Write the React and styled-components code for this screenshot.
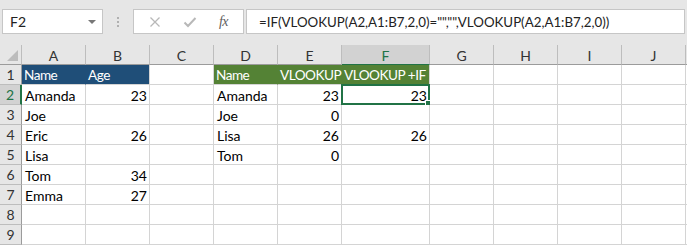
import React from "react";
import styled, { createGlobalStyle } from "styled-components";

const Global = createGlobalStyle`
  html, body { margin: 0; padding: 0; background: #fff; }
  body { font-family: Lato, "Liberation Sans", sans-serif; overflow: hidden; }
`;

const Page = styled.div`
  width: 687px;
  height: 245px;
  overflow: hidden;
  background: #fff;
`;

const Toolbar = styled.div`
  height: 45px;
  box-sizing: border-box;
  background: #e6e6e6;
  display: flex;
  align-items: flex-start;
  padding: 9px 2px 0 2px;
`;

const NameBox = styled.div`
  width: 101px;
  height: 25px;
  box-sizing: border-box;
  background: #fff;
  border: 1px solid #c6c6c6;
  display: flex;
  align-items: center;
  justify-content: space-between;
  padding: 0 6px 0 7px;
  font-size: 14px;
  color: #222;
`;

const Caret = styled.span`
  width: 0;
  height: 0;
  border-left: 4px solid transparent;
  border-right: 4px solid transparent;
  border-top: 4px solid #777;
`;

const Dots = styled.div`
  width: 30px;
  height: 25px;
  display: flex;
  flex-direction: column;
  align-items: center;
  justify-content: center;
  gap: 2px;
  & > span { width: 2px; height: 2px; background: #b0b0b0; }
`;

const FxBox = styled.div`
  width: 111px;
  height: 25px;
  box-sizing: border-box;
  background: #fff;
  border: 1px solid #c6c6c6;
  display: flex;
  align-items: center;
  justify-content: space-around;
  padding: 0 4px 0 4px;
  color: #b8b8b8;
`;

const Fx = styled.span`
  font-family: "Liberation Serif", serif;
  font-style: italic;
  font-size: 14px;
  color: #606060;
  letter-spacing: -0.5px;
`;

const FormulaBox = styled.div`
  flex: 1;
  margin-left: 2px;
  height: 25px;
  box-sizing: border-box;
  background: #fff;
  border: 1px solid #c6c6c6;
  display: flex;
  align-items: center;
  padding-left: 12px;
  font-size: 13.3px;
  color: #222;
  white-space: nowrap;
`;

const Grid = styled.div`
  display: grid;
  grid-template-columns: 22px repeat(5, 64px) 88px repeat(4, 64px) 1fr;
  grid-auto-rows: 20px;
`;

const Corner = styled.div`
  background: #e6e6e6;
  border-right: 1px solid #bdbdbd;
  border-bottom: 1px solid #9b9b9b;
  box-sizing: border-box;
  position: relative;
  &::after {
    content: "";
    position: absolute;
    right: 3px;
    bottom: 3px;
    width: 0;
    height: 0;
    border-left: 11px solid transparent;
    border-bottom: 11px solid #bcbcbc;
  }
`;

const ColHead = styled.div`
  box-sizing: border-box;
  background: ${(p) => (p.$sel ? "#d2d2d2" : "#e6e6e6")};
  border-right: 1px solid #bdbdbd;
  border-bottom: 1px solid ${(p) => (p.$sel ? "#217346" : "#9b9b9b")};
  display: flex;
  align-items: center;
  justify-content: center;
  font-size: 14px;
  color: ${(p) => (p.$sel ? "#217346" : "#333")};
  padding-top: 1px;
`;

const RowHead = styled.div`
  box-sizing: border-box;
  background: ${(p) => (p.$sel ? "#d2d2d2" : "#e6e6e6")};
  border-right: ${(p) => (p.$sel ? "2px solid #217346" : "1px solid #9b9b9b")};
  border-bottom: 1px solid #bdbdbd;
  display: flex;
  align-items: center;
  justify-content: center;
  font-size: 14px;
  color: ${(p) => (p.$sel ? "#217346" : "#333")};
`;

const fills = { blue: "#1f4e78", green: "#548235" };

const Cell = styled.div`
  box-sizing: border-box;
  position: relative;
  background: ${(p) => (p.$fill ? fills[p.$fill] : "#fff")};
  border-right: 1px solid ${(p) => (p.$fill && !p.$last ? fills[p.$fill] : "#d4d4d4")};
  border-bottom: 1px solid #d4d4d4;
  display: flex;
  align-items: center;
  justify-content: ${(p) => (p.$num ? "flex-end" : "flex-start")};
  padding: 1px 2px 0 ${(p) => (p.$fill ? "2px" : "3px")};
  font-size: ${(p) => (p.$fill ? "13.6px" : "14px")};
  letter-spacing: ${(p) => (p.$fill ? "-0.5px" : "0")};
  color: ${(p) => (p.$fill ? "#fff" : "#000")};
  white-space: nowrap;
`;

const Selection = styled.div`
  position: absolute;
  left: -1px;
  top: -1px;
  right: -1px;
  bottom: -1px;
  border: 2px solid #217346;
  pointer-events: none;
  &::after {
    content: "";
    position: absolute;
    right: -4px;
    bottom: -4px;
    width: 5px;
    height: 5px;
    background: #217346;
    border: 1px solid #fff;
  }
`;

const cols = ["A", "B", "C", "D", "E", "F", "G", "H", "I", "J"];

const data = {
  1: { A: ["Name", "blue"], B: ["Age", "blue", false, true], D: ["Name", "green"], E: ["VLOOKUP", "green"], F: ["VLOOKUP +IF", "green", false, true] },
  2: { A: ["Amanda"], B: ["23", null, true], D: ["Amanda"], E: ["23", null, true], F: ["23", null, true] },
  3: { A: ["Joe"], D: ["Joe"], E: ["0", null, true] },
  4: { A: ["Eric"], B: ["26", null, true], D: ["Lisa"], E: ["26", null, true], F: ["26", null, true] },
  5: { A: ["Lisa"], D: ["Tom"], E: ["0", null, true] },
  6: { A: ["Tom"], B: ["34", null, true] },
  7: { A: ["Emma"], B: ["27", null, true] },
  8: {},
  9: {},
};

function Cross() {
  return (
    <svg width="12" height="12" viewBox="0 0 12 12">
      <path d="M1.5 1.5 L10.5 10.5 M10.5 1.5 L1.5 10.5" stroke="#b8b8b8" strokeWidth="1.3" fill="none" />
    </svg>
  );
}

function Check() {
  return (
    <svg width="14" height="12" viewBox="0 0 14 12">
      <path d="M1.5 6.5 L5 10 L12.5 2" stroke="#b8b8b8" strokeWidth="2" fill="none" />
    </svg>
  );
}

export default function App() {
  return (
    <Page>
      <Global />
      <Toolbar>
        <NameBox>
          <span>F2</span>
          <Caret />
        </NameBox>
        <Dots>
          <span />
          <span />
          <span />
        </Dots>
        <FxBox>
          <Cross />
          <Check />
          <Fx>fx</Fx>
        </FxBox>
        <FormulaBox>=IF(VLOOKUP(A2,A1:B7,2,0)="","",VLOOKUP(A2,A1:B7,2,0))</FormulaBox>
      </Toolbar>
      <Grid>
        <Corner />
        {cols.map((c) => (
          <ColHead key={c} $sel={c === "F"}>{c}</ColHead>
        ))}
        <ColHead />
        {Object.keys(data).map((r) => (
          <React.Fragment key={r}>
            <RowHead $sel={r === "2"}>{r}</RowHead>
            {cols.map((c) => {
              const d = data[r][c];
              return (
                <Cell key={c} $fill={d && d[1]} $num={d && d[2]} $last={d && d[3]}>
                  {d ? d[0] : ""}
                  {r === "2" && c === "F" ? <Selection /> : null}
                </Cell>
              );
            })}
            <Cell />
          </React.Fragment>
        ))}
      </Grid>
    </Page>
  );
}
